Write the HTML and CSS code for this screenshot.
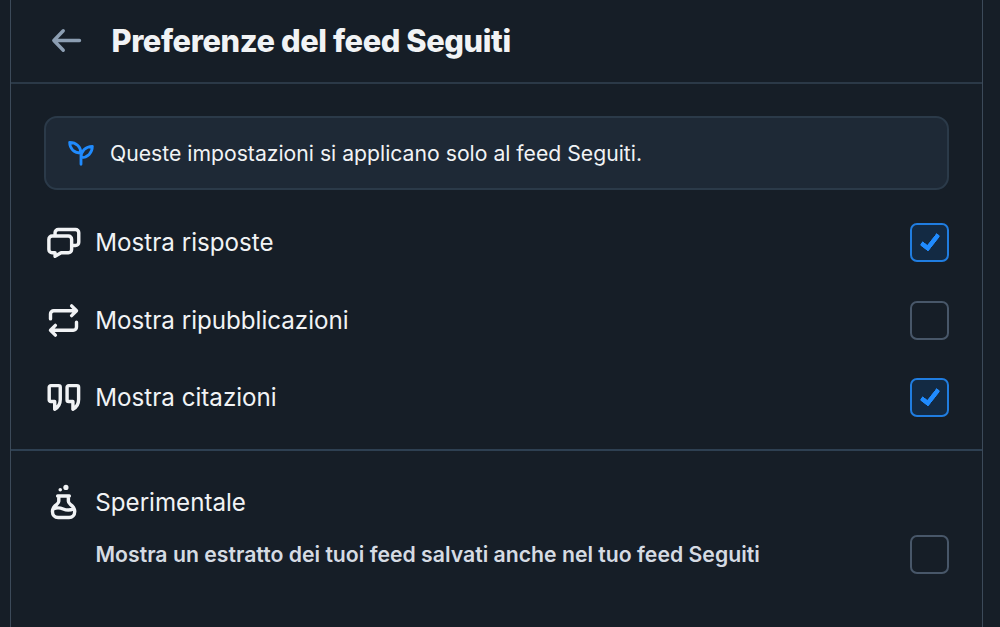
FILE: index.html
```
<!DOCTYPE html>
<html lang="it">
<head>
    <meta charset="UTF-8">
    <meta name="viewport" content="width=device-width, initial-scale=1.0">
    <title>Preferenze del feed Seguiti</title>
    <link rel="stylesheet" href="styles.css">
</head>
<body>

<div class="container">
    <header class="header">
        <svg class="icon back" viewBox="0 0 24 24"><path d="M10 6 4.2 12l5.8 6M4.2 12H20"/></svg>
        <h1>Preferenze del feed Seguiti</h1>
    </header>

    <main class="settings">
        <div class="notice">
            <svg class="icon leaf" viewBox="0 0 24 24"><path d="M12 20.500V12C12 7.500 8.500 4 3.500 4c0 5 3.500 8 8.500 8M12 15.500c0-5 3.500-8.500 8.500-8.500 0 5-3.500 8.500-8.500 8.500"/></svg>
            <p>Queste impostazioni si applicano solo al feed Seguiti.</p>
        </div>

        <label class="row">
            <svg class="icon" viewBox="0 0 24 24"><path d="M5 8h10a2 2 0 0 1 2 2v6.300a2 2 0 0 1-2 2h-4.500L6.800 20.500v-2.200H5a2 2 0 0 1-2-2V10a2 2 0 0 1 2-2ZM6.800 7.500V6a2 2 0 0 1 2-2h10.600a2 2 0 0 1 2 2v5.800a2 2 0 0 1-2 2h-2"/></svg>
            <span class="label">Mostra risposte</span>
            <input type="checkbox" checked>
        </label>

        <label class="row">
            <svg class="icon" viewBox="0 0 24 24"><path d="m17 3 3 3-3 3M19.500 6H6a2 2 0 0 0-2 2v3M7 15l-3 3 3 3M4.500 18H18a2 2 0 0 0 2-2v-3"/></svg>
            <span class="label">Mostra ripubblicazioni</span>
            <input type="checkbox">
        </label>

        <label class="row">
            <svg class="icon" viewBox="0 0 24 24"><path d="M4.200 4.700H9a1 1 0 0 1 1 1v7.500c0 2.800-1.200 4.800-3.400 6v-4.700H4.200a1 1 0 0 1-1-1V5.700a1 1 0 0 1 1-1ZM15.200 4.700H20.300a1 1 0 0 1 1 1v7.500c0 2.800-1.300 4.800-3.500 6v-4.700h-2.600a1 1 0 0 1-1-1V5.700a1 1 0 0 1 1-1Z"/></svg>
            <span class="label">Mostra citazioni</span>
            <input type="checkbox" checked>
        </label>
    </main>

    <section class="experimental">
        <div class="heading">
            <svg class="icon" viewBox="0 0 24 24">
                <path d="M8.400 8h7.200M9.100 8v3.300c0 .7-.4 1.200-1.200 1.800C6.100 14.400 5.200 16 5.200 17.500c0 2.200 1.400 3.700 3.500 3.700h6.700c2.100 0 3.500-1.500 3.500-3.700 0-1.500-.9-3.100-2.700-4.400-.8-.6-1.200-1.100-1.200-1.800V8M6 15.800c2.200-.8 3.900-.6 5.800.2 1.900.8 4 .9 6.200.1"/>
                <circle class="bubble" cx="13.500" cy="2.700" r="1.600"/>
                <circle class="bubble" cx="10" cy="4.200" r="1.100"/>
            </svg>
            <h2>Sperimentale</h2>
        </div>
        <label class="option">
            <span>Mostra un estratto dei tuoi feed salvati anche nel tuo feed Seguiti</span>
            <input type="checkbox">
        </label>
    </section>
</div>

</body>
</html>
```
FILE: styles.css
```
/* General Styles */
* {
    box-sizing: border-box;
}

body {
    font-family: 'Inter', sans-serif;
    background: #161e27;
    color: #f1f3f5;
    margin: 0;
    overflow: hidden;
}

h1, h2, p {
    margin: 0;
}

.container {
    width: 973px;
    height: 100vh;
    margin-left: 10px;
    border-left: 1px solid #3c4a59;
    border-right: 1px solid #3c4a59;
}

.icon {
    width: 39px;
    height: 39px;
    flex-shrink: 0;
    fill: none;
    stroke: #f1f3f5;
    stroke-width: 2.1;
    stroke-linecap: round;
    stroke-linejoin: round;
}

/* Header */
.header {
    display: flex;
    align-items: center;
    gap: 26px;
    height: 84px;
    padding: 0 35.500px 1px;
    border-bottom: 2px solid #2b3947;
}

.back {
    stroke: #8c9eb2;
}

h1 {
    font-size: 30.800px;
    font-weight: 800;
    letter-spacing: -0.4px;
}

/* Settings list */
.settings {
    padding: 32px 33px 12px;
    border-bottom: 2px solid #2e4052;
}

.notice {
    display: flex;
    align-items: center;
    gap: 13px;
    height: 74px;
    margin-bottom: 14px;
    padding: 0 19px;
    background: #1e2936;
    border: 2px solid #2b3a49;
    border-radius: 13px;
}

.notice p {
    font-size: 21.200px;
}

.leaf {
    width: 32px;
    height: 32px;
    stroke: #208bfe;
}

.row {
    display: flex;
    align-items: center;
    gap: 13px;
    height: 77.600px;
}

.row .icon, .heading .icon {
    margin-left: -0.5px;
    margin-right: -0.2px;
}

.label, h2 {
    flex: 1;
    font-size: 24.150px;
    font-weight: 400;
}

/* Checkboxes */
input {
    appearance: none;
    display: grid;
    place-items: center;
    width: 39px;
    height: 39px;
    margin: 0;
    flex-shrink: 0;
    border: 2px solid #485769;
    border-radius: 7px;
}

input:checked {
    background: #132a43;
    border-color: #207de0;
}

input:checked::before {
    content: '';
    box-sizing: border-box;
    width: 20px;
    height: 11px;
    border: solid #208bfe;
    border-width: 0 0 5px 5px;
    border-radius: 2px;
    transform: translateY(-2px) rotate(-52deg);
}

/* Experimental */
.experimental {
    padding: 32px 33px;
}

.heading {
    display: flex;
    align-items: center;
    gap: 13px;
}

.bubble {
    fill: #f1f3f5;
    stroke: none;
}

.option {
    display: flex;
    align-items: center;
    justify-content: space-between;
    margin-top: 13px;
    padding-left: 51.500px;
    color: #d5dbe3;
    font-size: 21.230px;
    font-weight: 600;
}
```
